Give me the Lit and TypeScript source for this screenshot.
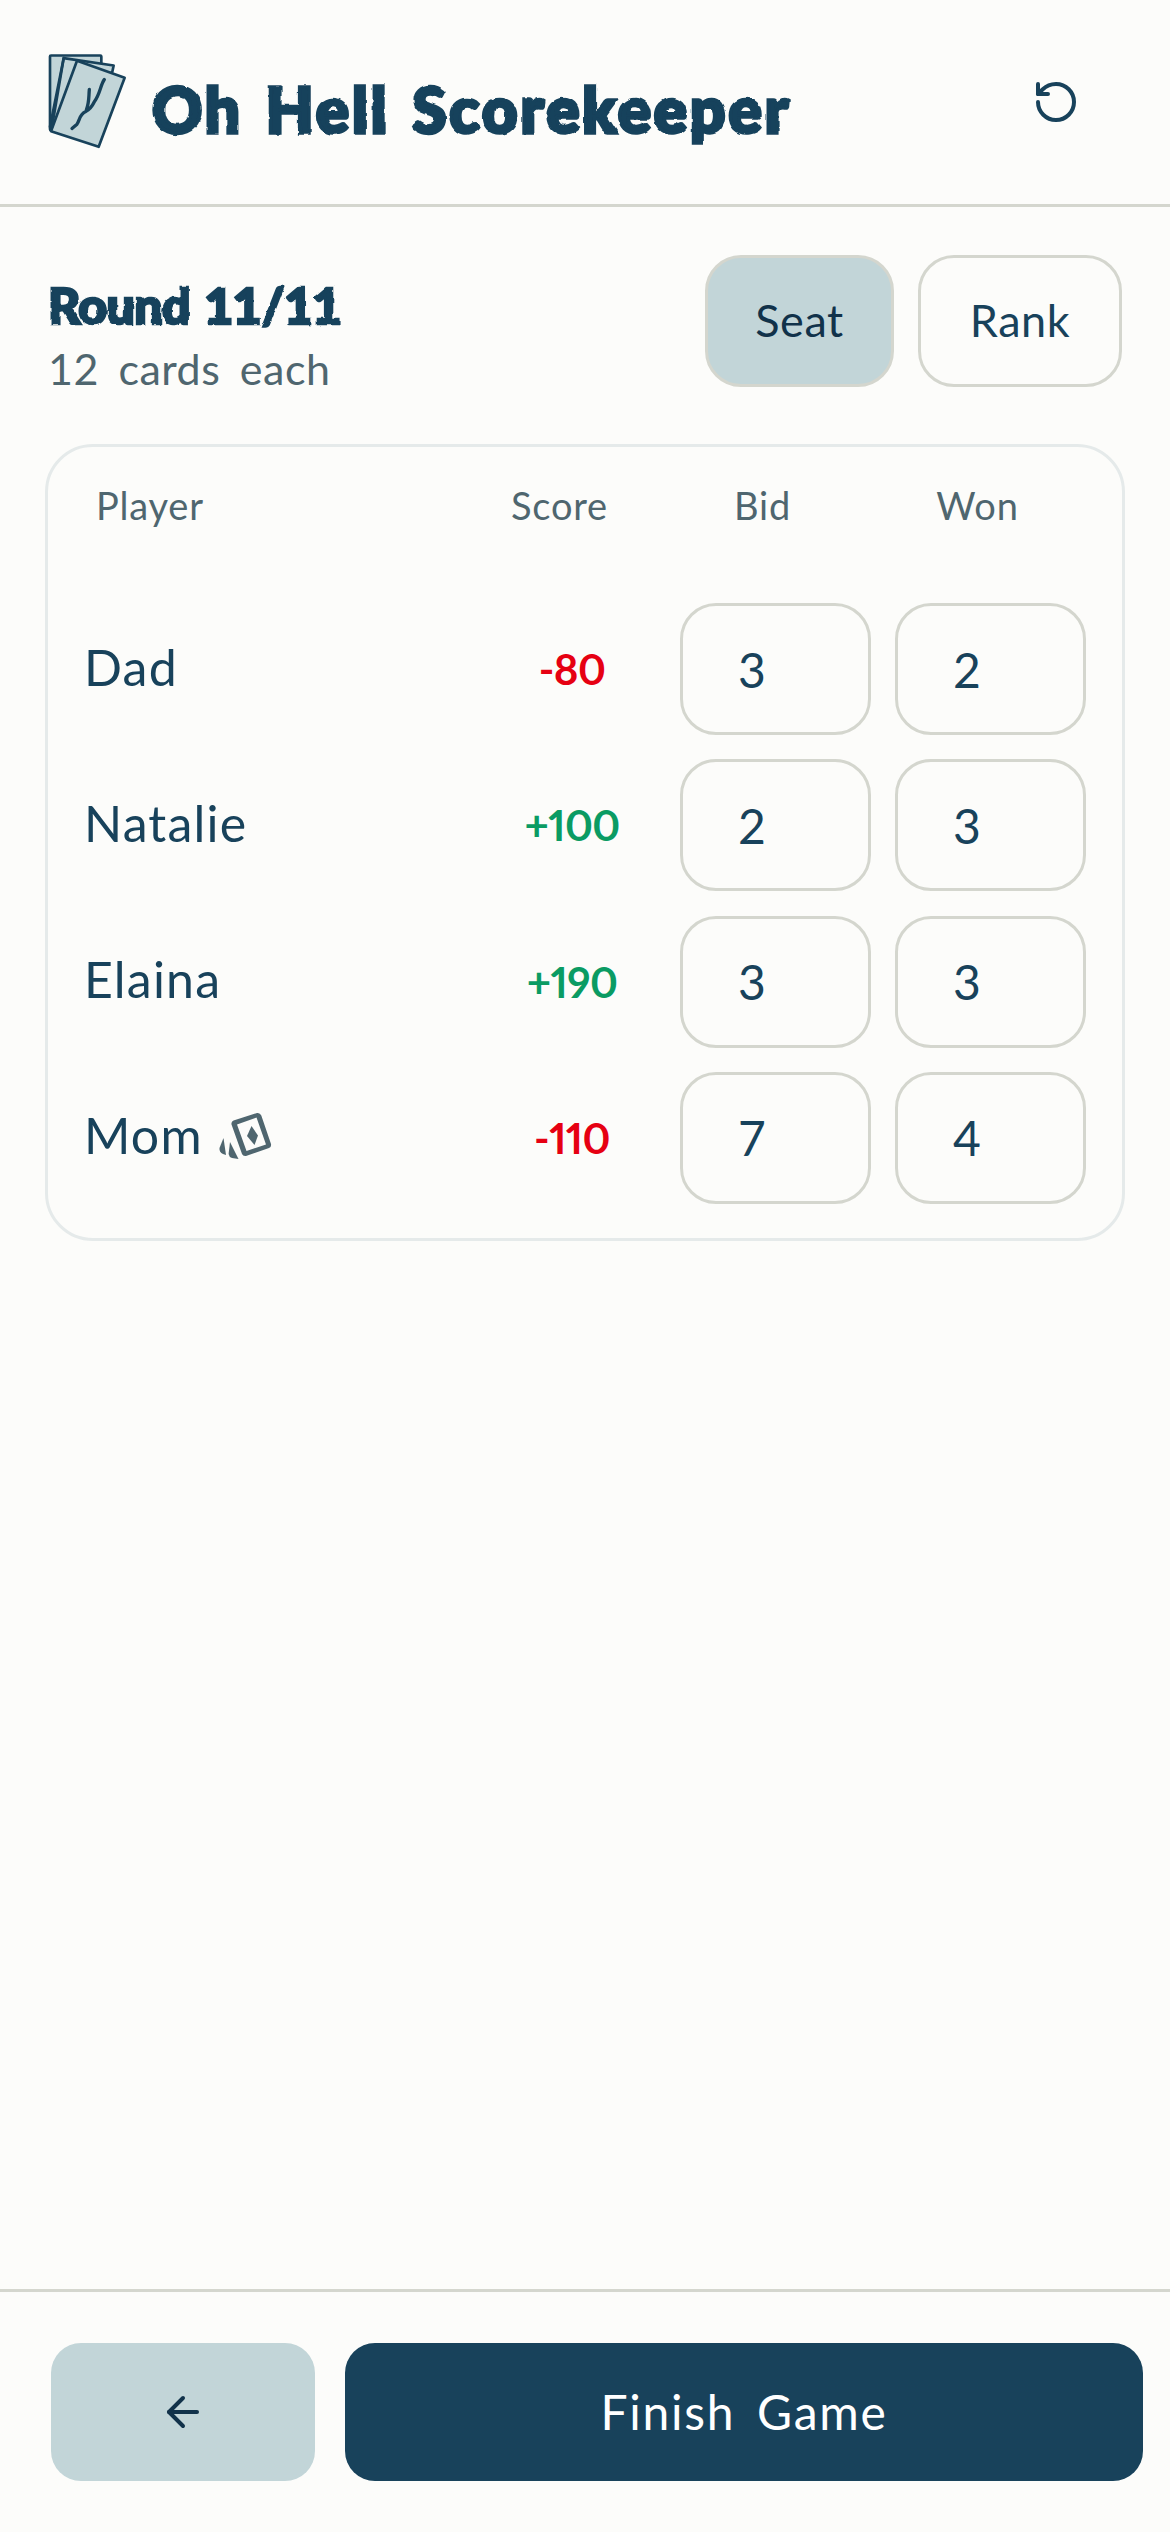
import { LitElement, html, css, svg } from "lit";
import { customElement } from "lit/decorators.js";

interface Row { name: string; score: string; bid: number; won: number; dealer?: boolean }

const ROWS: Row[] = [
  { name: "Dad", score: "-80", bid: 3, won: 2 },
  { name: "Natalie", score: "+100", bid: 2, won: 3 },
  { name: "Elaina", score: "+190", bid: 3, won: 3 },
  { name: "Mom", score: "-110", bid: 7, won: 4, dealer: true },
];

@customElement("app-root")
export class AppRoot extends LitElement {
  static styles = css`
    :host {
      display: flex;
      flex-direction: column;
      min-height: 2532px;
      background: #fcfcfa;
      color: #18425b;
      font-family: "Lato", "Noto Sans", sans-serif;
    }
    .defs { width: 0; height: 0; position: absolute; }
    .top {
      height: 207px;
      box-sizing: border-box;
      border-bottom: 3px solid #d4d6ce;
      display: flex;
      align-items: flex-start;
      padding: 52px 90px 0 47px;
    }
    .logo { width: 80px; height: 97px; flex: none; }
    .title {
      margin: 23px 0 0 25px;
      font-size: 62px;
      line-height: 68px;
      font-weight: 900;
      letter-spacing: 3px;
      word-spacing: 5px;
      -webkit-text-stroke: 3.5px #18425b;
      filter: url(#rough);
      white-space: nowrap;
    }
    .reset { margin: 26px 0 0 auto; width: 48px; height: 48px; flex: none; }
    main {
      flex: 1;
      padding: 48px 45px 0;
      display: flex;
      flex-direction: column;
    }
    .bar {
      display: flex;
      align-items: flex-start;
      justify-content: space-between;
      padding: 0 3px 0 3px;
      margin-bottom: 57px;
    }
    .intro { height: 132px; box-sizing: border-box; padding-top: 24px; }
    .round {
      font-size: 50px;
      line-height: 52px;
      font-weight: 900;
      letter-spacing: -0.6px;
      word-spacing: 3px;
      -webkit-text-stroke: 2.5px #18425b;
      filter: url(#rough);
    }
    .cards {
      font-size: 43px;
      line-height: 50px;
      margin-top: 13px;
      color: #4f666f;
      letter-spacing: 0.5px;
      word-spacing: 8px;
    }
    .toggle { display: flex; gap: 24px; }
    .tbtn {
      height: 132px;
      box-sizing: border-box;
      border: 3px solid #d4d6ce;
      border-radius: 36px;
      display: flex;
      align-items: center;
      justify-content: center;
      font-size: 45px;
      letter-spacing: 0.6px;
      padding-bottom: 2px;
      width: 204px;
    }
    .tbtn.on { width: 189px; background: #c2d5d8; color: #11324a; }
    .panel {
      border: 3px solid #e5eaea;
      border-radius: 48px;
      padding: 36px 36px 34px;
    }
    .heads {
      display: grid;
      grid-template-columns: 1fr 191px 215px 215px;
      padding: 0 1px 0 12px;
      margin-bottom: 76px;
      font-size: 38px;
      line-height: 44px;
      color: #4f666f;
      letter-spacing: 0.8px;
      text-align: center;
    }
    .heads .first { text-align: left; }
    .rows { display: flex; flex-direction: column; gap: 24.3px; }
    .row {
      display: grid;
      grid-template-columns: 1fr 168px 191px 191px;
      column-gap: 24px;
      align-items: center;
    }
    .name { display: flex; align-items: center; font-size: 50px; letter-spacing: 1.2px; }
    .label { padding-bottom: 5px; }
    .dealer { width: 54px; height: 54px; margin-left: 16px; flex: none; }
    .score {
      text-align: center;
      font-size: 42px;
      font-weight: 700;
      letter-spacing: -0.6px;
      font-variant-numeric: proportional-nums;
    }
    .score.neg { color: #e60012; }
    .score.pos { color: #0a9b63; }
    .field {
      height: 132px;
      box-sizing: border-box;
      border: 3px solid #d4d6ce;
      border-radius: 36px;
      display: flex;
      align-items: center;
      padding-left: 55px;
      font-size: 48px;
    }
    footer {
      border-top: 3px solid #d4d6ce;
      padding: 51px 27px 51px 51px;
      display: flex;
      gap: 30px;
    }
    .back {
      width: 264px;
      height: 138px;
      border-radius: 30px;
      background: #c2d5d8;
      display: flex;
      align-items: center;
      justify-content: center;
      flex: none;
    }
    .back svg { width: 48px; height: 48px; }
    .finish {
      flex: 1;
      height: 138px;
      box-sizing: border-box;
      padding-bottom: 2px;
      border-radius: 30px;
      background: #18425b;
      color: #fff;
      display: flex;
      align-items: center;
      justify-content: center;
      font-size: 48px;
      letter-spacing: 1.7px;
      word-spacing: 8px;
    }
  `;

  private logo() {
    return svg`
      <g fill="#c2d5d8" stroke="#18425b" stroke-width="8" stroke-linejoin="round" stroke-linecap="round">
        <rect x="89" y="76" width="154" height="224" rx="3"/>
        <path d="M130 84 L280 106 L276 125 L95 300 L89 290 Z"/>
        <path d="M170 92 L313 143 L235 350 L92 303 Z"/>
        <path d="M130 84 L95 290" fill="none"/>
      </g>
      <path d="M252 148 C240 165 240 190 222 215 C214 232 205 240 195 245 C178 252 178 270 170 282 L155 295 M207 178 C205 200 207 215 198 240"
        fill="none" stroke="#18425b" stroke-width="10" stroke-linecap="round" stroke-linejoin="round"/>`;
  }

  render() {
    return html`
      <svg class="defs" aria-hidden="true">
        <filter id="rough" x="-5%" y="-10%" width="110%" height="120%">
          <feTurbulence type="fractalNoise" baseFrequency="0.1" numOctaves="2" seed="4"/>
          <feDisplacementMap in="SourceGraphic" scale="3" xChannelSelector="R" yChannelSelector="G"/>
        </filter>
      </svg>
      <header class="top">
        <svg class="logo" viewBox="80 66 240 290">${this.logo()}</svg>
        <div class="title">Oh Hell Scorekeeper</div>
        <svg class="reset" viewBox="0 0 24 24" fill="none" stroke="#18425b" stroke-width="2" stroke-linecap="round" stroke-linejoin="round">
          <path d="M3 12a9 9 0 1 0 9-9 9.75 9.75 0 0 0-6.74 2.74L3 8"/>
          <path d="M3 3v5h5"/>
        </svg>
      </header>
      <main>
        <section class="bar">
          <div class="intro">
            <div class="round">Round 11/11</div>
            <div class="cards">12 cards each</div>
          </div>
          <div class="toggle">
            <div class="tbtn on">Seat</div>
            <div class="tbtn">Rank</div>
          </div>
        </section>
        <section class="panel">
          <div class="heads">
            <div class="first">Player</div><div>Score</div><div>Bid</div><div>Won</div>
          </div>
          <div class="rows">
            ${ROWS.map((r) => html`
              <div class="row">
                <div class="name"><span class="label">${r.name}</span>${r.dealer ? html`
                  <svg class="dealer" viewBox="0 0 54 54" fill="#4f666f">
                    <path d="M14.5 9.5 L38 2 Q41 1.5 42.3 4.5 L52 33 Q52.5 36 50 37 L27 45 Q24 45.5 23 43 L12.5 13.5 Q12 10.5 14.5 9.5 Z M18 13.5 L27.5 40 L47 33.5 L37.5 6.5 Z" fill-rule="evenodd"/>
                    <path d="M32.5 15 L39 24.5 L35.5 34 L28 25 Z"/>
                    <path d="M4.5 27 L0.5 37 Q0 41 4 43 L7 44 Z"/>
                    <path d="M11 31 L19.5 48 L13 47 Q10 46 9.6 43 Z"/>
                  </svg>` : ""}</div>
                <div class="score ${r.score.startsWith("-") ? "neg" : "pos"}">${r.score}</div>
                <div class="field">${r.bid}</div>
                <div class="field">${r.won}</div>
              </div>`)}
          </div>
        </section>
      </main>
      <footer>
        <div class="back">
          <svg viewBox="0 0 24 24" fill="none" stroke="#11324a" stroke-width="2" stroke-linecap="round" stroke-linejoin="round">
            <path d="M12 19l-7-7 7-7"/><path d="M19 12H5"/>
          </svg>
        </div>
        <div class="finish">Finish Game</div>
      </footer>
    `;
  }
}
